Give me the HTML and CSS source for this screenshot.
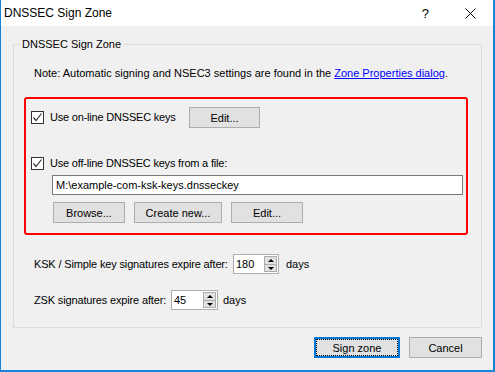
FILE: index.html
```html
<!DOCTYPE html>
<html lang="en">
<head>
  <meta charset="UTF-8">
  <title>DNSSEC Sign Zone</title>
  <link rel="stylesheet" href="styles.css">
</head>
<body>
  <div class="window">
    <div class="titlebar">
      <span class="title">DNSSEC Sign Zone</span>
      <span class="help">?</span>
      <svg class="close" width="11" height="11" viewBox="0 0 11 11"><path d="M0.5 0.5 L10.5 10.5 M10.5 0.5 L0.5 10.5" stroke="#000" stroke-width="1"/></svg>
    </div>

    <div class="content">
      <div class="group">
        <span class="legend">DNSSEC Sign Zone</span>
        <p class="note">Note: Automatic signing and NSEC3 settings are found in the <a href="#">Zone Properties dialog</a>.</p>

        <div class="highlight">
          <div class="row row-online">
            <label class="check check-online"><span class="box"><svg width="11" height="11" viewBox="0 0 11 11"><path d="M1.5 5.5 L4 8.5 L9.5 1.5" fill="none" stroke="#333" stroke-width="1.2"/></svg></span>Use on-line DNSSEC keys</label>
            <button class="btn btn-edit1">Edit...</button>
          </div>
          <div class="row row-offline">
            <label class="check"><span class="box"><svg width="11" height="11" viewBox="0 0 11 11"><path d="M1.5 5.5 L4 8.5 L9.5 1.5" fill="none" stroke="#333" stroke-width="1.2"/></svg></span>Use off-line DNSSEC keys from a file:</label>
          </div>
          <div class="file-input">M:\example-com-ksk-keys.dnsseckey</div>
          <div class="file-buttons">
            <button class="btn w72">Browse...</button>
            <button class="btn w88">Create new...</button>
            <button class="btn w72">Edit...</button>
          </div>
        </div>

        <div class="expire ksk">
          <span class="lbl">KSK / Simple key signatures expire after:</span>
          <div class="spin w46"><span class="val">180</span><span class="arrows"><span class="up"></span><span class="down"></span></span></div>
          <span class="unit">days</span>
        </div>
        <div class="expire zsk">
          <span class="lbl">ZSK signatures expire after:</span>
          <div class="spin w47"><span class="val">45</span><span class="arrows"><span class="up"></span><span class="down"></span></span></div>
          <span class="unit">days</span>
        </div>
      </div>

      <div class="footer">
        <button class="btn btn-default">Sign zone</button>
        <button class="btn btn-cancel">Cancel</button>
      </div>
    </div>
  </div>
</body>
</html>
```

FILE: styles.css
```css
/* Base */
html, body {
  margin: 0;
  padding: 0;
}

body {
  font-family: "Liberation Sans", Arial, sans-serif;
  font-size: 11px;
  color: #000;
  background: #f0f0f0;
}

/* Window frame */
.window {
  width: 495px;
  height: 372px;
  box-sizing: border-box;
  border: 1px solid #1883d7;
  border-top: none;
  border-bottom-width: 2px;
  border-right-width: 2px;
  background: #f0f0f0;
  display: flex;
  flex-direction: column;
}

.titlebar {
  height: 26px;
  background: #fff;
  display: flex;
  align-items: center;
  padding-left: 3px;
  font-size: 12px;
}

.title {
  flex: 1;
}

.help {
  font-size: 13px;
  margin-right: 36px;
}

.close {
  margin-right: 17px;
}

/* Content */
.content {
  padding: 18px 11px 0 12px;
}

.group {
  position: relative;
  height: 284px;
  box-sizing: border-box;
  border: 1px solid #dcdcdc;
}

.legend {
  position: absolute;
  top: -7px;
  left: 6px;
  padding: 0 2px;
  background: #f0f0f0;
  line-height: 13px;
}

.note {
  margin: 22px 0 0 20px;
  line-height: 13px;
}

.note a {
  color: #0000ff;
}

/* Red highlight box */
.highlight {
  margin: 17px 13px 0 10px;
  height: 138px;
  box-sizing: border-box;
  border: 2px solid #ff0000;
  border-radius: 3px;
  padding: 8px 3px 0 5px;
}

.row {
  display: flex;
  align-items: center;
}

.row-online {
  height: 21px;
}

.row-offline {
  margin-top: 29px;
  height: 13px;
}

.check {
  display: flex;
  align-items: center;
  gap: 6px;
  line-height: 13px;
  letter-spacing: -0.2px;
}

.check-online {
  width: 158px;
  flex: none;
}

.box {
  width: 13px;
  height: 13px;
  box-sizing: border-box;
  border: 1px solid #333;
  background: #fff;
  display: flex;
  align-items: center;
  justify-content: center;
  flex: none;
}

.btn {
  font-family: "Liberation Sans", Arial, sans-serif;
  font-size: 11px;
  height: 21px;
  padding: 0;
  border: 1px solid #adadad;
  background: #e1e1e1;
  color: #000;
}

.btn-edit1 {
  width: 71px;
}

.file-input {
  margin: 5px 0 0 21px;
  height: 20px;
  box-sizing: border-box;
  border: 1px solid #7a7a7a;
  background: #fff;
  padding: 0 3px;
  line-height: 18px;
}

.file-buttons {
  display: flex;
  gap: 9px;
  margin: 7px 0 0 22px;
}

.w72 { width: 72px; }
.w88 { width: 88px; }

/* Expire rows */
.expire {
  display: flex;
  align-items: center;
  margin-left: 20px;
  height: 20px;
}

.ksk {
  margin-top: 19px;
}

.zsk {
  margin-top: 16px;
}

.lbl {
  flex: none;
  white-space: nowrap;
  letter-spacing: -0.15px;
}

.ksk .lbl {
  width: 199px;
}

.zsk .lbl {
  width: 137px;
}

.spin {
  height: 20px;
  box-sizing: border-box;
  border: 1px solid #adadad;
  background: #fff;
  display: flex;
  align-items: center;
  padding: 1px;
  margin-right: 7px;
}

.zsk .spin {
  margin-right: 5px;
}

.w46 { width: 46px; }
.w47 { width: 47px; }

.val {
  flex: 1;
  padding-left: 1px;
}

.arrows {
  width: 13px;
  height: 16px;
  display: flex;
  flex-direction: column;
  border: 1px solid #adadad;
  box-sizing: border-box;
  background: #e1e1e1;
}

.up, .down {
  flex: 1;
  position: relative;
}

.up {
  border-bottom: 1px solid #adadad;
}

.up::after, .down::after {
  content: "";
  position: absolute;
  left: 3px;
  border-left: 3px solid transparent;
  border-right: 3px solid transparent;
}

.up::after {
  top: 2px;
  border-bottom: 3px solid #000;
}

.down::after {
  top: 2px;
  border-top: 3px solid #000;
}

/* Footer */
.footer {
  display: flex;
  justify-content: flex-end;
  gap: 9px;
  margin-top: 9px;
}

.btn-default {
  width: 86px;
  border-color: #0078d7;
  box-shadow: inset 0 0 0 1px #0078d7;
  outline: 1px dotted #000;
  outline-offset: -3px;
}

.btn-cancel {
  width: 73px;
}
```
